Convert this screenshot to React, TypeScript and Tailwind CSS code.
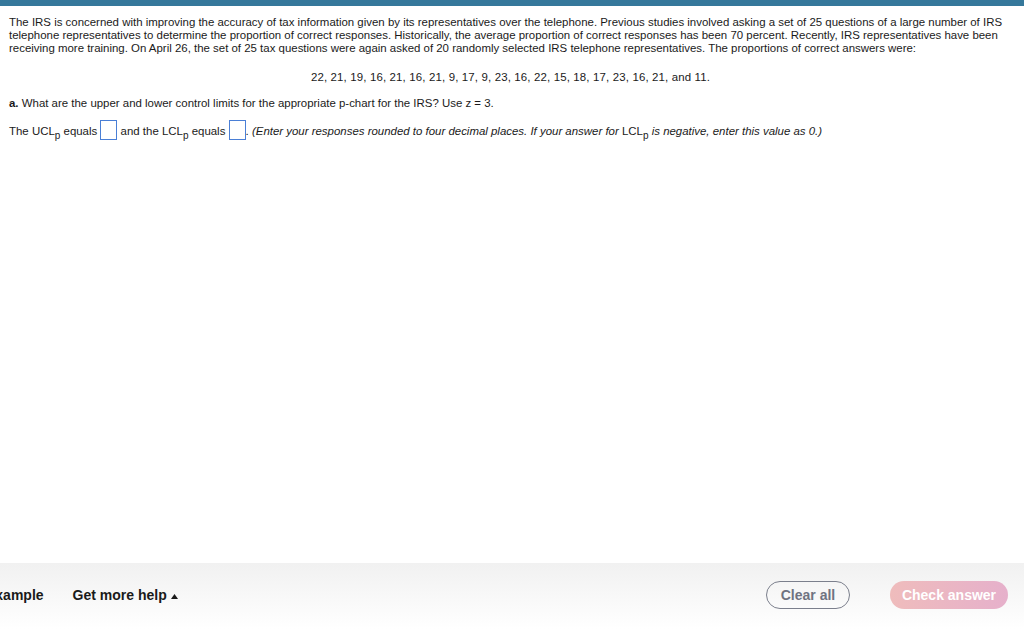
import React from "react";

function Box() {
  return (
    <span className="inline-block align-middle w-[17px] h-[20px] border border-[#4a7fd6] bg-white -mt-[3px]" />
  );
}

function Sub({ base }: { base: string }) {
  return (
    <span>
      {base}
      <span className="text-[10px] relative top-[4px]">p</span>
    </span>
  );
}

export default function App() {
  return (
    <div className="w-[1024px] h-[629px] bg-white relative overflow-hidden flex flex-col" style={{ fontFamily: '"Liberation Sans", Arial, sans-serif' }}>
      <div className="h-[6px] bg-[#35789b] shrink-0" />
      <div className="flex-1 pl-[9px] pr-[12px] pt-[10px] text-[11.45px] leading-[13px] text-[#1a1a1a]">
        <p>
          The IRS is concerned with improving the accuracy of tax information given by its representatives over the telephone. Previous studies involved asking a set of 25 questions of a large number of IRS telephone representatives to determine the proportion of correct responses. Historically, the average proportion of correct responses has been 70 percent. Recently, IRS representatives have been receiving more training. On April 26, the set of 25 tax questions were again asked of 20 randomly selected IRS telephone representatives. The proportions of correct answers were:
        </p>
        <p className="text-center mt-[16px] tracking-[0.15px]">
          22, 21, 19, 16, 21, 16, 21, 9, 17, 9, 23, 16, 22, 15, 18, 17, 23, 16, 21, and 11.
        </p>
        <p className="mt-[13px]">
          <span className="font-bold">a.</span> What are the upper and lower control limits for the appropriate p-chart for the IRS? Use z = 3.
        </p>
        <p className="mt-[13px] leading-[16px]">
          The <Sub base="UCL" /> equals{" "}
          <Box />{" "}
          and the <Sub base="LCL" /> equals{" "}
          <Box />
          .{" "}
          <span className="italic">
            (Enter your responses rounded to four decimal places. If your answer for{" "}
            <span className="not-italic"><Sub base="LCL" /></span> is negative, enter this value as 0.)
          </span>
        </p>
      </div>
      <div className="h-[66px] shrink-0 bg-gradient-to-b from-[#f1f1f1] to-[#ffffff] flex items-center text-[14px] font-bold text-[#1a1a1a]">
        <span className="-ml-[14px] mt-[-2px]">Example</span>
        <span className="ml-[29px] mt-[-2px] flex items-center">
          Get more help
          <svg width="7" height="5" viewBox="0 0 7 5" className="ml-[4px] mt-[2px]">
            <path d="M0 5 L3.5 0 L7 5 Z" fill="#1a1a1a" />
          </svg>
        </span>
        <div className="flex-1" />
        <button className="h-[28px] w-[84px] rounded-full border-[1.5px] border-[#7b7f8c] text-[#6f7381] text-[14px] font-bold mt-[-2px] bg-transparent">
          Clear all
        </button>
        <button className="ml-[40px] mr-[16px] h-[28px] w-[118px] rounded-full text-white text-[14px] font-bold mt-[-2px] bg-gradient-to-r from-[#efbcbc] to-[#e6b0cb]">
          Check answer
        </button>
      </div>
    </div>
  );
}
